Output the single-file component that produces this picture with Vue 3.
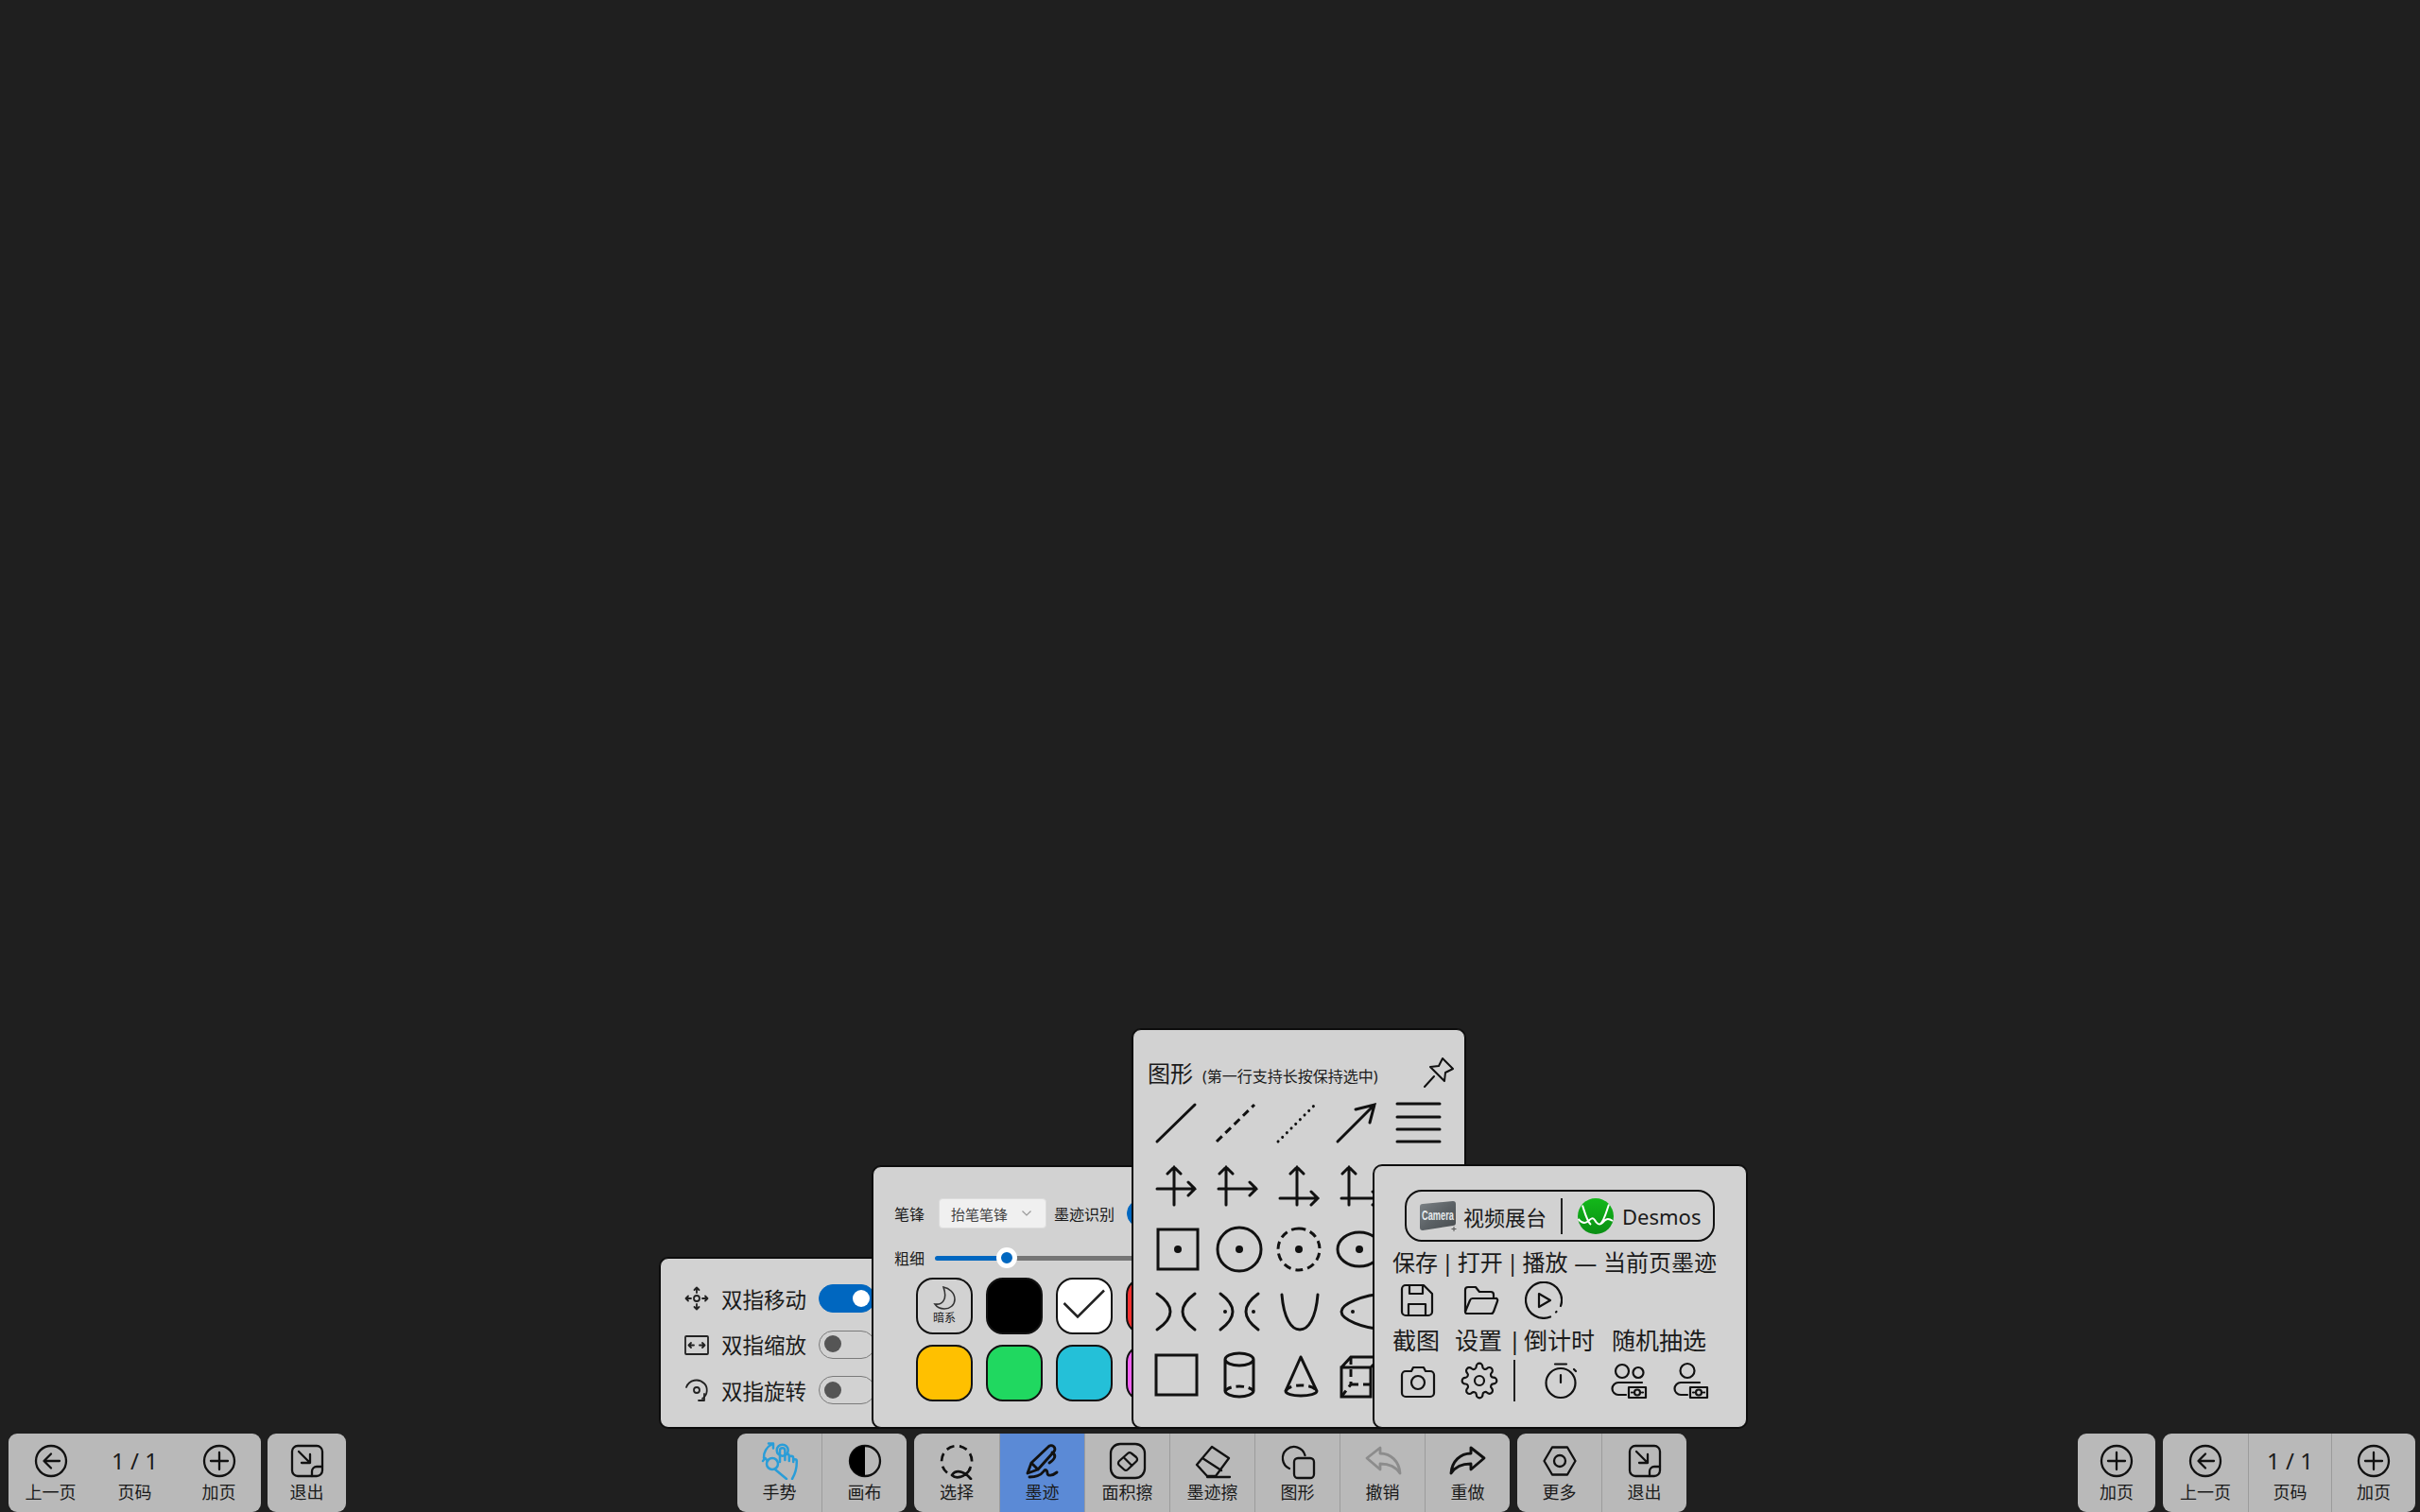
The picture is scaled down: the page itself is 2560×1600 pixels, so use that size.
<template>
  <div class="screen">
    <!-- 底部工具栏 -->
    <div v-for="(cluster, k) in toolbar" :key="k" class="cluster">
      <div v-for="(group, g) in cluster" :key="g" class="group">
        <div
          v-for="c in group.cells"
          :key="c.label + c.w"
          class="cell"
          :class="{ active: c.active, ruled: group.ruled }"
          :style="{ width: c.w + 'px' }"
        >
          <div v-if="c.page" class="page-no">1 / 1</div>
          <svg v-else class="ico" :class="c.tone" viewBox="0 0 40 40">
            <path v-for="d in icons[c.icon]" :key="d" :d="d" />
            <path v-for="d in fills[c.icon] || []" :key="d" class="solid" :d="d" />
          </svg>
          <span class="label">{{ c.label }}</span>
        </div>
      </div>
    </div>

    <!-- 手势面板 -->
    <div class="panel gesture">
      <div v-for="r in gestures" :key="r.label" class="g-row">
        <svg class="g-ico" viewBox="0 0 28 28">
          <path v-for="d in r.paths" :key="d" :d="d" />
        </svg>
        <span>{{ r.label }}</span>
        <div class="toggle" :class="{ on: r.on }"><i></i></div>
      </div>
    </div>

    <!-- 墨迹面板 -->
    <div class="panel ink">
      <div class="ink-row">
        <span class="ink-text">笔锋</span>
        <div class="select">
          <span>抬笔笔锋</span>
          <svg width="12" height="8" viewBox="0 0 12 8"><path d="M1.5 1.5L6 6l4.5-4.5" /></svg>
        </div>
        <span class="ink-text">墨迹识别</span>
        <div class="toggle on small"><i></i></div>
      </div>
      <div class="ink-row thick">
        <span class="ink-text">粗细</span>
        <div class="slider">
          <div class="fill"></div>
          <div class="rest"></div>
          <div class="thumb"></div>
        </div>
      </div>
      <div class="swatches">
        <div class="swatch dark-mode">
          <svg width="28" height="26" viewBox="0 0 28 26">
            <path d="M13 1C19 2 25 7 25 14c0 6-5 10-11 10-5 0-8-2-10-5 7 1 14-4 9-18z" />
          </svg>
          <span>暗系</span>
        </div>
        <div v-for="s in swatches" :key="s.color" class="swatch" :style="{ background: s.color }">
          <svg v-if="s.check" class="check" width="60" height="60" viewBox="0 0 60 60">
            <path d="M8.5 27L23 41.500 51 13.500" />
          </svg>
        </div>
      </div>
    </div>

    <!-- 图形面板 -->
    <div class="panel shapes">
      <div class="shape-head">
        <span class="shape-title">图形</span>
        <span class="shape-sub">(第一行支持长按保持选中)</span>
        <svg class="pin" width="34" height="34" viewBox="0 0 34 34">
          <path d="M21 2L32 13 24 17 23 26 8 11 17 10zM12 21L2 32" />
        </svg>
      </div>
      <div class="shape-grid">
        <svg v-for="(s, i) in shapes" :key="i" viewBox="0 0 64 66.500" width="64" height="66.500">
          <path v-if="s.s" :d="s.s" />
          <path v-if="s.dash" class="dash" :d="s.dash" />
          <path v-if="s.dot" class="dotted" :d="s.dot" />
          <circle v-for="p in s.pts || []" :key="p[0]" :cx="p[0]" :cy="p[1]" :r="p[2]" class="pt" />
        </svg>
      </div>
    </div>

    <!-- 更多面板 -->
    <div class="panel more">
      <div class="apps">
        <svg class="camera-logo" width="40" height="34" viewBox="0 0 40 34">
          <defs>
            <linearGradient id="cam" x1="0" y1="0" x2="1" y2="1">
              <stop offset="0" stop-color="#7c8286" />
              <stop offset="0.5" stop-color="#5c6266" />
              <stop offset="1" stop-color="#474b4e" />
            </linearGradient>
          </defs>
          <path d="M0 7Q0 4 3 4L35 1Q38 1 38 4V24Q38 27 35 27L3 32Q0 32 0 29z" fill="url(#cam)" />
          <text transform="translate(2 21) scale(0.66 1)" font-size="14" class="camera-text">Camera</text>
          <path d="M36 28v5M33.500 30.500h5" stroke="#555" stroke-width="1" />
        </svg>
        <span class="app-name">视频展台</span>
        <i class="app-split"></i>
        <svg width="38" height="38" viewBox="0 0 38 38">
          <defs>
            <linearGradient id="des" x1="0" y1="0" x2="0" y2="1">
              <stop offset="0" stop-color="#13b81a" />
              <stop offset="1" stop-color="#0a8f14" />
            </linearGradient>
          </defs>
          <circle cx="19" cy="19" r="19" fill="url(#des)" />
          <path d="M5 7.500C8 17 10 25 14 28M33 6.500C30 15 28 24 24 27M.5 22C4 26 7 27 10 25C13 23 15 19 18 23C20 27 23 29 26 26C29 23 31 20 37 24" fill="none" stroke="#fff" stroke-width="2" />
        </svg>
        <span class="desmos">Desmos</span>
      </div>

      <div class="more-text first-line">保存 | 打开 | 播放 <span class="long-dash">—</span> 当前页墨迹</div>
      <div class="more-icons first">
        <svg viewBox="0 0 40 40"><path v-for="d in moreIcons.save" :key="d" :d="d" /></svg>
        <svg viewBox="0 0 40 40"><path v-for="d in moreIcons.folder" :key="d" :d="d" /></svg>
        <svg viewBox="0 0 40 40"><path v-for="d in moreIcons.play" :key="d" :d="d" /></svg>
      </div>

      <div class="more-text second">
        <span class="t-shot">截图</span>
        <span class="t-set">设置 |</span>
        <span class="t-time">倒计时</span>
        <span>随机抽选</span>
      </div>
      <div class="more-icons last">
        <svg viewBox="0 0 40 40"><path v-for="d in moreIcons.camera" :key="d" :d="d" /></svg>
        <svg viewBox="0 0 24 24" class="gear"><path :d="moreIcons.gear" /><circle cx="12" cy="12" r="3" /></svg>
        <i class="more-split"></i>
        <svg viewBox="0 0 40 40"><path v-for="d in moreIcons.timer" :key="d" :d="d" /></svg>
        <svg viewBox="0 0 40 40" class="u1"><path v-for="d in moreIcons.users" :key="d" :d="d" /></svg>
        <svg viewBox="0 0 40 40"><path v-for="d in moreIcons.user" :key="d" :d="d" /></svg>
      </div>
    </div>
  </div>
</template>

<script setup>
const circle = "M20 4a16 16 0 1 0 0 32a16 16 0 1 0 0-32z"

const icons = {
  back: [circle, "M29 20H13M20 12.500L12.500 20L20 27.500"],
  plus: [circle, "M20 11v18M11 20h18"],
  exit: [
    "M10 4H30a6 6 0 0 1 6 6V30a6 6 0 0 1-6 6H10a6 6 0 0 1-6-6V10a6 6 0 0 1 6-6z",
    "M25 36V31a5 5 0 0 1 5-5h6",
    "M11 10L23 22M14 22H23V13",
  ],
  hand: [
    "M22.700 2.700a6 6 0 1 0 0 12a6 6 0 1 0 0-12z",
    "M20 21V9a2.700 2.700 0 0 1 5.400 0V19M25.400 15a2.200 2.200 0 0 1 4.400 0V20M29.800 17a2.200 2.200 0 0 1 4.400 0V21M34.200 20a1.800 1.800 0 0 1 3.600 0C38 28 36 34 33 39",
    "M12 17a6 6 0 1 0 0 12a6 6 0 1 0 0-12zM15 29L27 39",
    "M12 2C6 5 2.500 11 3 17M8 1.500H13V6.500",
    "M2 20L4.500 17L7 20",
  ],
  half: [circle],
  lasso: [
    "M10 32.500A16 16 0 1 1 33 29.500",
    "M15 35C19 29 27 30 35 39M15 35C19 39 28 38 34 29",
  ],
  pen: [
    "M4 33L8 22L26 5a3.500 3.500 0 0 1 6 5L15 29zM8 22L15 29",
    "M30 11C35 14 33 18 27 22",
    "M6 37C12 37 18 35 21 31C23 28 25 30 25 33C25 36 30 36 35 32",
  ],
  area: [
    "M12 2H28a10 10 0 0 1 10 10V28a10 10 0 0 1-10 10H12a10 10 0 0 1-10-10V12a10 10 0 0 1 10-10z",
    "M11 20L20 12a3 3 0 0 1 4 0L29 16a3 3 0 0 1 0 4.500L20 29a3 3 0 0 1-4 0L11 24.500a3 3 0 0 1 0-4.500zM15.500 16L24.500 25",
  ],
  eraser: ["M3 24L19 5L37 17L23 36H14zM9 17L29 30", "M14 37H38"],
  shape: [
    "M27.500 14A12 12 0 1 0 11 28",
    "M20 17H33a4 4 0 0 1 4 4V34a4 4 0 0 1-4 4H20a4 4 0 0 1-4-4V21a4 4 0 0 1 4-4z",
  ],
  undo: ["M3 17L17 6V12C28 12 37 20 38 33C33 25 26 23 17 23V29z"],
  redo: ["M37 17L23 6V12C12 12 3 20 2 33C7 25 14 23 23 23V29z"],
  nut: ["M3.500 20L12 5.500H28L36.500 20L28 34.500H12zM20 14a6 6 0 1 0 0 12a6 6 0 1 0 0-12z"],
}

const fills = {
  half: ["M20 4a16 16 0 1 0 0 32z"],
}

const toolbar = [
  [
    {
      ruled: false,
      cells: [
        { w: 89, icon: "back", label: "上一页" },
        { w: 89, page: true, label: "页码" },
        { w: 89, icon: "plus", label: "加页" },
      ],
    },
    { ruled: false, cells: [{ w: 83, icon: "exit", label: "退出" }] },
  ],
  [
    {
      ruled: true,
      cells: [
        { w: 89, icon: "hand", label: "手势", tone: "blue" },
        { w: 90, icon: "half", label: "画布" },
      ],
    },
    {
      ruled: true,
      cells: [
        { w: 90, icon: "lasso", label: "选择", tone: "lasso" },
        { w: 90, icon: "pen", label: "墨迹", active: true, tone: "bold" },
        { w: 90, icon: "area", label: "面积擦" },
        { w: 90, icon: "eraser", label: "墨迹擦" },
        { w: 90, icon: "shape", label: "图形" },
        { w: 90, icon: "undo", label: "撤销", tone: "muted" },
        { w: 90, icon: "redo", label: "重做", tone: "bold" },
      ],
    },
    {
      ruled: true,
      cells: [
        { w: 89, icon: "nut", label: "更多" },
        { w: 90, icon: "exit", label: "退出" },
      ],
    },
  ],
  [
    { ruled: false, cells: [{ w: 82, icon: "plus", label: "加页" }] },
    {
      ruled: true,
      cells: [
        { w: 90, icon: "back", label: "上一页" },
        { w: 88, page: true, label: "页码" },
        { w: 89, icon: "plus", label: "加页" },
      ],
    },
  ],
]

const gestures = [
  {
    label: "双指移动",
    on: true,
    paths: [
      "M14 11a3 3 0 1 0 0 6a3 3 0 1 0 0-6z",
      "M14 3v5M11.500 5L14 2.500L16.500 5M14 20v5M11.500 23L14 25.500L16.500 23",
      "M3 14h5M5 11.500L2.500 14L5 16.500M20 14h5M23 11.500L25.500 14L23 16.500",
    ],
  },
  {
    label: "双指缩放",
    on: false,
    paths: [
      "M3 5H25a1 1 0 0 1 1 1V23a1 1 0 0 1-1 1H3a1 1 0 0 1-1-1V6a1 1 0 0 1 1-1z",
      "M6 14.500h5M8 12L5.500 14.500L8 17M17 14.500h5M20 12L22.500 14.500L20 17",
    ],
  },
  {
    label: "双指旋转",
    on: false,
    paths: [
      "M3 11C6 3 16 1 22 7C26 11 26 19 20 23",
      "M14 11a3 3 0 1 0 0 6a3 3 0 1 0 0-6z",
      "M22 18V25H16",
    ],
  },
]

const swatches = [
  { color: "#000" },
  { color: "#fff", check: true },
  { color: "#f23030" },
  { color: "#ffc000" },
  { color: "#20d860" },
  { color: "#24c0d8" },
  { color: "#f060f0" },
]

const shapes = [
  { s: "M10 53L50 14" },
  { dash: "M9 53L49 14" },
  { dot: "M10 53L49 14" },
  { s: "M9 53L48 14M28 19L48 14L43 33" },
  { s: "M8 13H53M8 27H53M8 40H53M8 53H53" },

  { s: "M28 53V13M21 20L28 13L35 20M10 36H50M43 29L50 36L43 43" },
  { s: "M19 53V13M12 20L19 13L26 20M11 36H51M44 29L51 36L44 43" },
  { s: "M30 53V13M23 20L30 13L37 20M12 46H52M45 39L52 46L45 53" },
  { s: "M21 53V13M14 20L21 13L28 20M13 46H53M46 39L53 46L46 53" },
  {},

  { s: "M11 13H53V55H11z", pts: [[32, 34, 4]] },
  { s: "M33 11a23 23 0 1 0 0 46a23 23 0 1 0 0-46z", pts: [[33, 34, 4]] },
  { dash: "M32 12a22 22 0 1 0 0 44a22 22 0 1 0 0-44z", pts: [[32, 34, 4]] },
  { s: "M32 16a23 18 0 1 0 0 36a23 18 0 1 0 0-36z", pts: [[32, 34, 4]] },
  {},

  { s: "M10 14Q38 33 10 52M50 14Q24 33 50 52" },
  { s: "M13 14Q39 33 13 52M53 14Q27 33 53 52", pts: [[18, 33, 2], [48, 33, 2]] },
  { s: "M14 15C16 40 24 52 33 52C42 52 50 40 52 15" },
  { s: "M60 14C35 15 13 25 13 33C13 41 35 51 60 52", pts: [[25, 33, 2]] },
  {},

  { s: "M9 13H52V55H9z" },
  { s: "M33 11c8 0 15 3 15 6.500s-7 6.500-15 6.500-15-3-15-6.500 7-6.500 15-6.500zM18 17.500V51c0 3 7 6 15 6s15-3 15-6V17.500", dash: "M18 51c2-3 8-5 15-5s13 2 15 5" },
  { s: "M34 15L18 51c0 3 7 5 16 5s17-2 17-5L34 15", dash: "M18 51c2-4 8-6 16-6s15 2 17 6" },
  { s: "M13 26H44V57H13zM13 26L23 15H56M44 26L55 15", dash: "M23 15V44M23 44H60M13 57L23 44" },
  {},
]

const moreIcons = {
  save: [
    "M8 4H27L36 13V32a4 4 0 0 1-4 4H8a4 4 0 0 1-4-4V8a4 4 0 0 1 4-4z",
    "M12 4V13H26V5M11 36V24H29V36",
  ],
  folder: [
    "M4 32V9a3 3 0 0 1 3-3H15l4 5H31a3 3 0 0 1 3 3v3",
    "M4 32L9 20a3 3 0 0 1 3-2H36a2 2 0 0 1 2 3L34 32a3 3 0 0 1-3 2H6a2 2 0 0 1-2-2z",
  ],
  play: ["M27 37.500A19 19 0 1 1 38 26", "M33 32.500l.5-.5", "M15 13L27 20L15 27z"],
  camera: [
    "M3 14a4 4 0 0 1 4-4h6l2-4h11l2 4h5a4 4 0 0 1 4 4v19a4 4 0 0 1-4 4H7a4 4 0 0 1-4-4z",
    "M20 15a7 7 0 1 0 0 14a7 7 0 1 0 0-14z",
  ],
  gear: "M19.400 15a1.650 1.650 0 0 0 .33 1.820l.06.06a2 2 0 0 1 0 2.830 2 2 0 0 1-2.830 0l-.06-.06a1.650 1.650 0 0 0-1.820-.33 1.650 1.650 0 0 0-1 1.510V21a2 2 0 0 1-2 2 2 2 0 0 1-2-2v-.09A1.650 1.650 0 0 0 9 19.400a1.650 1.650 0 0 0-1.820.33l-.06.06a2 2 0 0 1-2.830 0 2 2 0 0 1 0-2.830l.06-.06a1.650 1.650 0 0 0 .33-1.820 1.650 1.650 0 0 0-1.510-1H3a2 2 0 0 1-2-2 2 2 0 0 1 2-2h.09A1.650 1.650 0 0 0 4.600 9a1.650 1.650 0 0 0-.33-1.820l-.06-.06a2 2 0 0 1 0-2.830 2 2 0 0 1 2.830 0l.06.06a1.650 1.650 0 0 0 1.820.33H9a1.650 1.650 0 0 0 1-1.510V3a2 2 0 0 1 2-2 2 2 0 0 1 2 2v.09a1.650 1.650 0 0 0 1 1.510 1.650 1.650 0 0 0 1.820-.33l.06-.06a2 2 0 0 1 2.830 0 2 2 0 0 1 0 2.830l-.06.06a1.650 1.650 0 0 0-.33 1.820V9a1.650 1.650 0 0 0 1.510 1H21a2 2 0 0 1 2 2 2 2 0 0 1-2 2h-.09a1.650 1.650 0 0 0-1.510 1z",
  timer: [
    "M20 7a15.500 15.500 0 1 0 0 31a15.500 15.500 0 1 0 0-31z",
    "M20 14v8M14 2.500H26M34 8l2 2",
  ],
  users: [
    "M13 3a7 7 0 1 0 0 14a7 7 0 1 0 0-14zM30 6a5.500 5.500 0 1 0 0 11a5.500 5.500 0 1 0 0-11z",
    "M34 22H9a6.500 6.500 0 0 0 0 13H17",
    "M20 27h18v11H20zM29 29.500a3 3 0 1 0 0 6a3 3 0 1 0 0-6zM23 32.500h1M34 32.500h1",
  ],
  user: [
    "M17 2a7.500 7.500 0 1 0 0 15a7.500 7.500 0 1 0 0-15z",
    "M30 22H10a6.500 6.500 0 0 0 0 13H17",
    "M20 27h18v11H20zM29 29.500a3 3 0 1 0 0 6a3 3 0 1 0 0-6zM23 32.500h1M34 32.500h1",
  ],
}
</script>

<style>
html, body { margin: 0; background: #1f1f1f; }
</style>

<style scoped>
.screen {
  position: relative;
  width: 2560px;
  height: 1600px;
  background: #1f1f1f;
  box-sizing: border-box;
  padding: 0 5px 0 9px;
  display: flex;
  justify-content: space-between;
  align-items: flex-end;
  overflow: hidden;
  color: #1a1a1a;
  font-family: "Noto Sans", "Noto Sans CJK SC", sans-serif;
}

.cluster { display: flex; gap: 8px; }
.cluster:first-child { gap: 7px; }
.group {
  display: flex;
  height: 83px;
  background: #b9b9b9;
  border-radius: 9px;
  overflow: hidden;
}
.cell {
  box-sizing: border-box;
  display: flex;
  flex-direction: column;
  align-items: center;
  padding-top: 9px;
}
.cell.ruled + .cell.ruled { border-left: 1px solid #9c9c9c; }
.cell.active { background: #5b8ad6; }
.ico {
  width: 40px;
  height: 40px;
  fill: none;
  stroke: #111;
  stroke-width: 2.300;
  stroke-linecap: round;
  stroke-linejoin: round;
}
.ico .solid { fill: #000; stroke: none; }
.ico.blue { stroke: #2a9dd8; stroke-width: 2.500; }
.ico.muted { stroke: #8c8c8c; stroke-width: 2.800; }
.ico.bold { stroke-width: 2.900; }
.ico.lasso { stroke-width: 2.700; }
.ico.lasso path:first-child { stroke-dasharray: 8.500 5.500; stroke-linecap: butt; }
.page-no {
  height: 40px;
  line-height: 40px;
  font-size: 24px;
  font-weight: 400;
  white-space: pre;
}
.label { margin-top: 0; font-size: 18px; line-height: 26px; white-space: nowrap; }

.panel {
  position: absolute;
  box-sizing: border-box;
  background: #d2d2d2;
  border: 1px solid #0c0c0c;
  border-radius: 9px;
  box-shadow: 0 0 0 1px #0c0c0c;
}

.gesture { left: 698px; top: 1331px; width: 240px; height: 180px; padding: 18px 0 0 24px; }
.g-row {
  display: flex;
  align-items: center;
  height: 48.500px;
  font-size: 22.500px;
  white-space: nowrap;
}
.g-ico {
  width: 28px;
  height: 28px;
  margin-right: 12px;
  fill: none;
  stroke: #222;
  stroke-width: 1.800;
  stroke-linecap: round;
  stroke-linejoin: round;
}
.toggle {
  position: relative;
  flex: none;
  box-sizing: border-box;
  width: 60px;
  height: 30px;
  margin-left: 13px;
  border: 1.500px solid #7a7a7a;
  border-radius: 15px;
}
.toggle i {
  position: absolute;
  left: 5px;
  top: 4.500px;
  width: 18px;
  height: 18px;
  border-radius: 50%;
  background: #555;
}
.toggle.on { background: #0067c0; border-color: #0067c0; }
.toggle.on i { left: auto; right: 5px; background: #fff; }
.toggle.small { margin-left: 13px; }

.ink { left: 923px; top: 1234px; width: 290px; height: 277px; padding: 33px 0 0 22px; font-size: 16px; }
.ink-row { display: flex; align-items: center; height: 32px; white-space: nowrap; }
.ink-text { flex: none; }
.select {
  flex: none;
  box-sizing: border-box;
  display: flex;
  align-items: center;
  justify-content: space-between;
  width: 114px;
  height: 32px;
  margin: 0 8px 0 15px;
  padding: 0 14px 0 12px;
  background: #f0f0f0;
  border: 1px solid #dcdcdc;
  border-radius: 4px;
  color: #444;
  font-size: 15px;
}
.select svg { fill: none; stroke: #999; stroke-width: 1.200; }
.thick { margin-top: 15px; }
.slider { position: relative; flex: none; display: flex; width: 240px; height: 5px; margin-left: 11px; }
.slider .fill { width: 76px; background: #0067c0; border-radius: 3px 0 0 3px; }
.slider .rest { flex: 1; background: #757575; }
.thumb {
  position: absolute;
  left: 65px;
  top: -9px;
  box-sizing: border-box;
  width: 22px;
  height: 22px;
  background: #0067c0;
  border: 5.500px solid #fff;
  border-radius: 50%;
}
.swatches {
  display: grid;
  grid-template-columns: repeat(4, 60px);
  grid-auto-rows: 60px;
  gap: 11px 14px;
  margin: 5px 0 0 23px;
}
.swatch {
  box-sizing: border-box;
  position: relative;
  border: 2px solid #111;
  border-radius: 18px;
}
.swatch.dark-mode {
  display: flex;
  flex-direction: column;
  align-items: center;
  padding-top: 7px;
  font-size: 12px;
  line-height: 15px;
}
.dark-mode svg { fill: none; stroke: #333; stroke-width: 1.600; }
.check { position: absolute; left: -2px; top: -2px; fill: none; stroke: #222; stroke-width: 2.500; }

.shapes { left: 1198px; top: 1089px; width: 352px; height: 422px; padding: 0 15px; }
.shape-head { display: flex; align-items: baseline; height: 65px; padding-top: 29px; box-sizing: border-box; position: relative; }
.shape-title { font-size: 24px; line-height: 34px; }
.shape-sub { margin-left: 10px; font-size: 16px; }
.pin {
  position: absolute;
  right: -5px;
  top: 28px;
  fill: none;
  stroke: #111;
  stroke-width: 2;
  stroke-linejoin: round;
  stroke-linecap: round;
}
.shape-grid { display: grid; grid-template-columns: repeat(5, 64px); grid-auto-rows: 66.500px; }
.shape-grid svg { display: block; fill: none; stroke: #111; stroke-width: 3; stroke-linecap: round; }
.shape-grid .dash { stroke-dasharray: 8 5; stroke-linecap: butt; }
.shape-grid .dotted { stroke-dasharray: 0.100 6.500; }
.shape-grid .pt { fill: #111; stroke: none; }

.more { left: 1453px; top: 1233px; width: 395px; height: 278px; padding: 25px 0 0 19px; }
.apps {
  box-sizing: border-box;
  display: flex;
  align-items: center;
  width: 328px;
  height: 55px;
  margin-left: 13px;
  padding-left: 14px;
  border: 2px solid #111;
  border-radius: 18px;
}
.camera-text { font-family: "Liberation Sans", sans-serif; font-weight: 700; fill: #e6eaec; }
.app-name { margin-left: 6px; font-size: 22px; white-space: nowrap; }
.app-split { width: 2px; height: 38px; margin: 0 16px 0 15px; background: #222; }
.desmos { margin-left: 9px; font-size: 22px; }
.more-text { height: 36px; margin-top: 4px; font-size: 24px; line-height: 36px; white-space: nowrap; }
.first-line { word-spacing: -2.500px; }
.long-dash { margin: 0 3px; }
.more-text.second { display: flex; margin-top: 4px; font-size: 25px; }
.t-shot { width: 66px; }
.t-set { width: 73px; }
.t-time { width: 93px; }
.more-icons { display: flex; }
.more-icons svg {
  flex: none;
  width: 40px;
  height: 40px;
  fill: none;
  stroke: #111;
  stroke-width: 2.200;
  stroke-linecap: round;
  stroke-linejoin: round;
}
.more-icons.first { gap: 27px; margin: 2px 0 0 6px; }
.more-icons.last { align-items: center; gap: 25px; margin: 3px 0 0 7px; }
.more-icons .gear { stroke-width: 1.300; }
.more-split { width: 2px; height: 44px; margin: 0 3px 0 -9px; background: #222; }
.more-icons .u1 { margin: 0 0 0 7px; }
</style>
